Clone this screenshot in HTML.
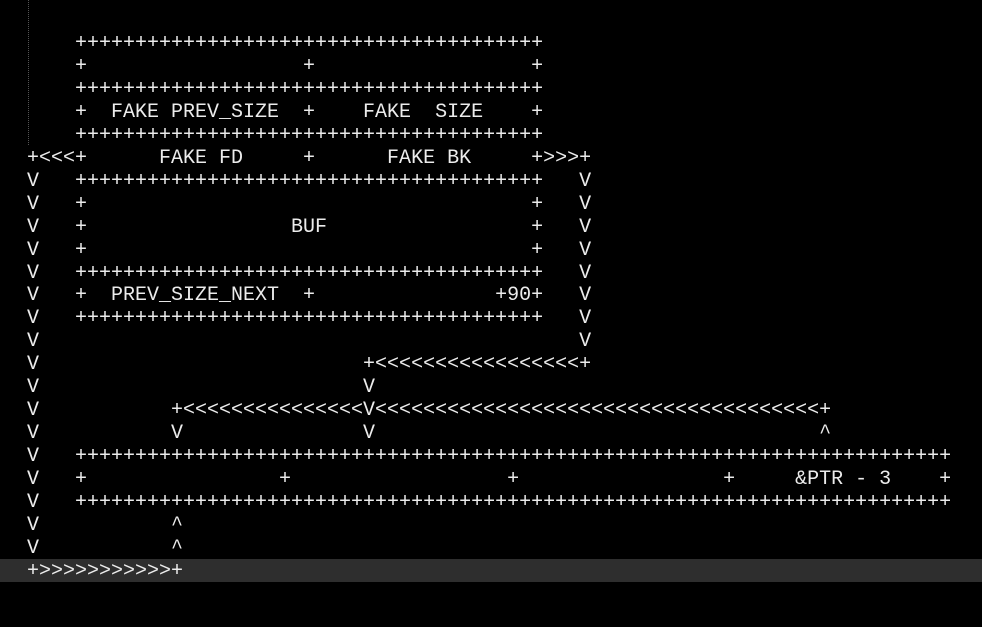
<!DOCTYPE html>
<html><head><meta charset="utf-8"><style>
html,body{margin:0;padding:0;background:#000;width:982px;height:627px;overflow:hidden}
.bar{position:absolute;left:0;top:559px;width:982px;height:23px;background:#2e2e2e}
.dot{position:absolute;left:28px;top:0;height:145px;border-left:1px dotted #555}
pre{position:absolute;left:27px;top:33px;margin:0;font-family:"Liberation Mono",monospace;font-size:20px;line-height:22.96px;color:#ececec}
</style></head><body>
<div class="bar"></div><div class="dot"></div>
<pre>    +++++++++++++++++++++++++++++++++++++++
    +                  +                  +
    +++++++++++++++++++++++++++++++++++++++
    +  FAKE PREV_SIZE  +    FAKE  SIZE    +
    +++++++++++++++++++++++++++++++++++++++
+&lt;&lt;&lt;+      FAKE FD     +      FAKE BK     +&gt;&gt;&gt;+
V   +++++++++++++++++++++++++++++++++++++++   V
V   +                                     +   V
V   +                 BUF                 +   V
V   +                                     +   V
V   +++++++++++++++++++++++++++++++++++++++   V
V   +  PREV_SIZE_NEXT  +               +90+   V
V   +++++++++++++++++++++++++++++++++++++++   V
V                                             V
V                           +&lt;&lt;&lt;&lt;&lt;&lt;&lt;&lt;&lt;&lt;&lt;&lt;&lt;&lt;&lt;&lt;&lt;+
V                           V
V           +&lt;&lt;&lt;&lt;&lt;&lt;&lt;&lt;&lt;&lt;&lt;&lt;&lt;&lt;&lt;V&lt;&lt;&lt;&lt;&lt;&lt;&lt;&lt;&lt;&lt;&lt;&lt;&lt;&lt;&lt;&lt;&lt;&lt;&lt;&lt;&lt;&lt;&lt;&lt;&lt;&lt;&lt;&lt;&lt;&lt;&lt;&lt;&lt;&lt;&lt;&lt;&lt;+
V           V               V                                     ^
V   +++++++++++++++++++++++++++++++++++++++++++++++++++++++++++++++++++++++++
V   +                +                  +                 +     &amp;PTR - 3    +
V   +++++++++++++++++++++++++++++++++++++++++++++++++++++++++++++++++++++++++
V           ^
V           ^
+&gt;&gt;&gt;&gt;&gt;&gt;&gt;&gt;&gt;&gt;&gt;+</pre>
</body></html>
